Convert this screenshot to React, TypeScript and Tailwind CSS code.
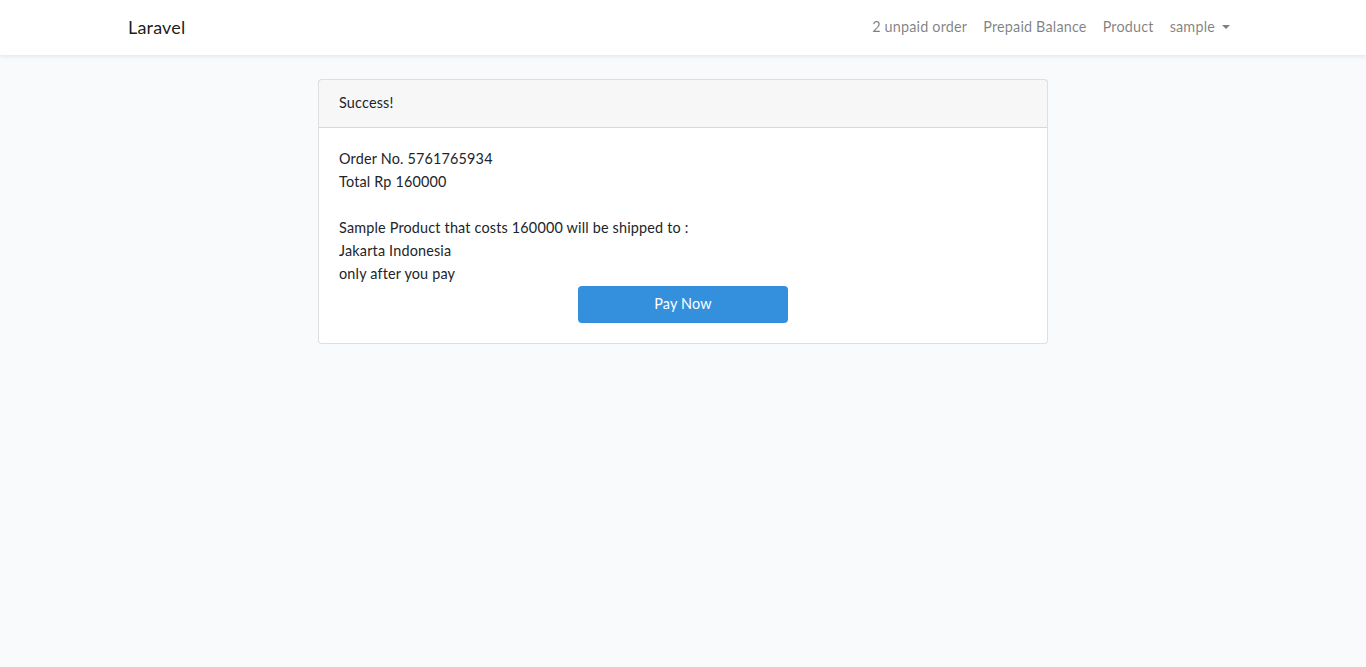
export default function App() {
  const links = ["2 unpaid order", "Prepaid Balance", "Product"];
  return (
    <div className="min-h-screen bg-[#f8fafc] text-[#212529] text-[14.4px] leading-[1.6] tracking-[0.18px] font-['Lato','Noto_Sans',sans-serif]">
      <nav className="bg-white shadow-[0_2px_4px_rgba(0,0,0,0.075)] h-[55px]">
        <div className="w-[1140px] mx-auto px-[15px] h-full flex items-center justify-between">
          <span className="text-[18px] text-[rgba(0,0,0,0.9)] -mt-px">Laravel</span>
          <div className="flex items-center -mt-px">
            {links.map((l) => (
              <span key={l} className="px-2 py-2 text-[rgba(0,0,0,0.5)]">
                {l}
              </span>
            ))}
            <span className="px-2 py-2 text-[rgba(0,0,0,0.5)] flex items-center">
              sample
              <span className="ml-[7px] mt-[1px] w-0 h-0 border-t-[4.5px] border-t-[rgba(0,0,0,0.5)] border-x-[4.5px] border-x-transparent" />
            </span>
          </div>
        </div>
      </nav>
      <main className="py-6">
        <div className="w-[730px] mx-auto">
          <div className="bg-white border border-[rgba(0,0,0,0.125)] rounded">
            <div className="px-5 pt-[11px] pb-[13px] bg-[rgba(0,0,0,0.03)] border-b border-[rgba(0,0,0,0.125)]">
              Success!
            </div>
            <div className="px-5 pt-[19px] pb-5">
              <div>Order No. 5761765934</div>
              <div>Total Rp 160000</div>
              <div className="h-[23px]" />
              <div>Sample Product that costs 160000 will be shipped to :</div>
              <div>Jakarta Indonesia</div>
              <div className="mb-px">only after you pay</div>
              <div className="flex justify-center">
                <button className="w-[210px] h-[37px] pb-[3px] bg-[#3490dc] text-white rounded">Pay Now</button>
              </div>
            </div>
          </div>
        </div>
      </main>
    </div>
  );
}
